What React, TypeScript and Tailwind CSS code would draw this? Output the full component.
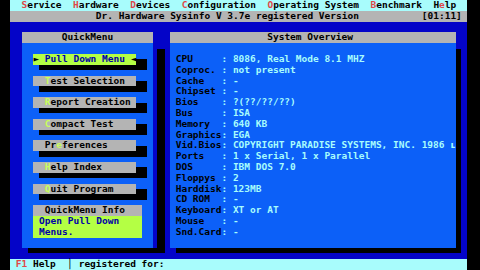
import React from "react";

function Hk({ children, c = "text-[#e04848]" }: { children: React.ReactNode; c?: string }) {
  return <span className={c}>{children}</span>;
}

function MenuBar() {
  return (
    <div className="h-[10.8px] leading-[10.8px] bg-[#a8fcfc] text-black whitespace-pre">
      {"  "}
      <Hk>S</Hk>
      {"ervice  "}
      <Hk>H</Hk>
      {"ardware  "}
      <Hk>D</Hk>
      {"evices  "}
      <Hk>C</Hk>
      {"onfiguration  "}
      <Hk>O</Hk>
      {"perating System  "}
      <Hk>B</Hk>
      {"enchmark  H"}
      <Hk>e</Hk>
      {"lp"}
    </div>
  );
}

function TitleBar() {
  return (
    <div className="h-[10.8px] leading-[10.8px] bg-[#b4b4b4] text-black whitespace-pre">
      {"               Dr. Hardware Sysinfo V 3.7e registered Version           [01:11]"}
    </div>
  );
}

function Button({ pre, hk, post }: { pre: string; hk: string; post: string }) {
  return (
    <div className="flex flex-col h-[21.6px] pl-[11.4px]">
      <div className="flex">
        <div className="w-[103px] h-[10.8px] leading-[10.8px] bg-[#b4b4b4] text-black whitespace-pre">
          {"  " + pre}
          <span className="text-[#c8ff5a]">{hk}</span>
          {post}
        </div>
        <div className="w-[10.5px] flex flex-col">
          <div className="h-[5.4px]" />
          <div className="h-[5.4px] bg-black" />
        </div>
      </div>
      <div className="ml-[6px] w-[107.5px] h-[5.4px] bg-black" />
    </div>
  );
}

function ActiveButton() {
  return (
    <div className="flex flex-col h-[21.6px] pl-[11.4px]">
      <div className="flex">
        <div className="w-[103px] h-[10.8px] leading-[10.8px] bg-[#b4ff44] text-[#0000a8] whitespace-pre">
          <span className="text-black">{"►"}</span>
          {" Pull Down Menu "}
          <span className="text-black">{"◄"}</span>
        </div>
        <div className="w-[10.5px] flex flex-col">
          <div className="h-[5.4px]" />
          <div className="h-[5.4px] bg-black" />
        </div>
      </div>
      <div className="ml-[6px] w-[107.5px] h-[5.4px] bg-black" />
    </div>
  );
}

function QuickMenu() {
  return (
    <div className="ml-[12px] flex flex-col">
      <div className="flex">
        <div className="w-[131px] h-[216px] bg-[#0c60f8] flex flex-col">
          <div className="h-[10.8px] leading-[10.8px] bg-[#b4b4b4] text-black text-center whitespace-pre">
            QuickMenu
          </div>
          <div className="h-[10.8px]" />
          <ActiveButton />
          <Button pre="" hk="T" post="est Selection" />
          <Button pre="" hk="R" post="eport Creation" />
          <Button pre="" hk="C" post="ompact Test" />
          <Button pre="Pr" hk="e" post="ferences" />
          <Button pre="" hk="H" post="elp Index" />
          <Button pre="" hk="Q" post="uit Program" />
          <div className="ml-[11.4px] w-[108.5px] flex flex-col">
            <div className="h-[10.8px] leading-[10.8px] bg-[#b4b4b4] text-black whitespace-pre">
              {"  QuickMenu Info"}
            </div>
            <div className="h-[21.6px] bg-[#b4ff44] text-[#0000a8] whitespace-pre flex flex-col">
              <div className="h-[10.8px] leading-[10.8px]">{" Open Pull Down"}</div>
              <div className="h-[10.8px] leading-[10.8px]">{" Menus."}</div>
            </div>
          </div>
        </div>
        <div className="w-[4px]" />
        <div className="w-[8px] flex flex-col">
          <div className="h-[16.2px]" />
          <div className="flex-1 bg-black" />
        </div>
      </div>
      <div className="ml-[5.7px] w-[137.3px] h-[4.5px] bg-black" />
    </div>
  );
}

const rows: [string, string][] = [
  ["CPU     ", "8086, Real Mode 8.1 MHZ"],
  ["Coproc. ", "not present"],
  ["Cache   ", "-"],
  ["Chipset ", "-"],
  ["Bios    ", "?(??/??/??)"],
  ["Bus     ", "ISA"],
  ["Memory  ", "640 KB"],
  ["Graphics", "EGA"],
  ["Vid.Bios", "COPYRIGHT PARADISE SYSTEMS, INC. 1986 ʟ"],
  ["Ports   ", "1 x Serial, 1 x Parallel"],
  ["DOS     ", "IBM DOS 7.0"],
  ["Floppys ", "2"],
  ["Harddisk", "123MB"],
  ["CD ROM  ", "-"],
  ["Keyboard", "XT or AT"],
  ["Mouse   ", "-"],
  ["Snd.Card", "-"],
];

function Overview() {
  return (
    <div className="ml-[5px] flex flex-col">
      <div className="flex">
        <div className="w-[285.5px] h-[216px] bg-[#0c60f8] flex flex-col">
          <div className="h-[10.8px] leading-[10.8px] bg-[#b4b4b4] text-black whitespace-pre">
            {"                 System Overview"}
          </div>
          <div className="h-[10.8px]" />
          {rows.map(([k, v]) => (
            <div key={k} className="h-[10.8px] leading-[10.8px] pl-[5.7px] whitespace-pre">
              <span className="text-black">{k}</span>
              <span className="text-[#a8fcfc]">{": " + v}</span>
            </div>
          ))}
        </div>
        <div className="w-[5.8px] flex flex-col">
          <div className="h-[16.2px]" />
          <div className="flex-1 bg-black" />
        </div>
      </div>
      <div className="ml-[6px] w-[285.3px] h-[4.5px] bg-black" />
    </div>
  );
}

function StatusBar() {
  return (
    <div className="h-[10.8px] leading-[10.8px] bg-[#a8fcfc] text-black whitespace-pre">
      {" "}
      <Hk>F1</Hk>
      {" Help  │ registered for:"}
    </div>
  );
}

export default function App() {
  return (
    <div className="w-[480px] h-[270px] bg-black flex overflow-hidden font-['DejaVu_Sans_Mono',monospace] text-[9.5px] font-bold">
      <div className="ml-[10px] w-[457px] h-[270px] flex flex-col">
        <MenuBar />
        <TitleBar />
        <div className="h-[237.6px] bg-[#0404c8] flex items-start pt-[10.8px]">
          <QuickMenu />
          <Overview />
        </div>
        <StatusBar />
      </div>
    </div>
  );
}
